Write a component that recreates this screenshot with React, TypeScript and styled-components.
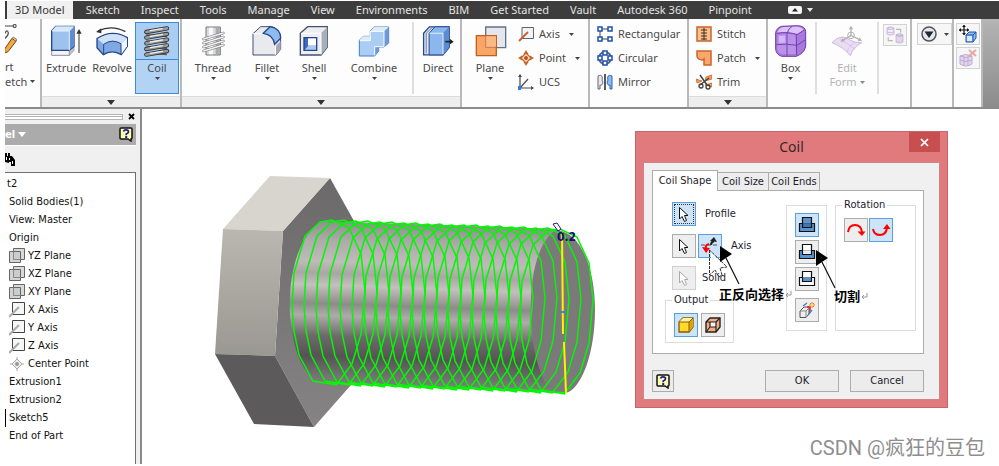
import React from "react";
import styled, { createGlobalStyle } from "styled-components";

const ui = `"Noto Sans", "Open Sans", sans-serif`;
const classic = `"DejaVu Sans Condensed", "DejaVu Sans", sans-serif`;

const Global = createGlobalStyle`
  * { box-sizing: border-box; }
  body { margin: 0; background: #fff; font-family: ${ui}; }
  button { font: inherit; color: inherit; padding: 0; margin: 0; }
  svg { display: block; flex: none; }
`;

/* ---------- frame ---------- */
const Page = styled.div`
  min-height: calc(100vh - 2px);
  padding: 1px 0 0 5px;
  display: flex;
  flex-direction: column;
`;
const TabBar = styled.nav`
  height: 18px;
  flex: none;
  display: flex;
  align-items: center;
  padding-left: 2px;
  background: #3d3d3d;
`;
const RibbonTab = styled.button<{ $active?: boolean }>`
  height: 18px;
  padding: 0 8px;
  margin-right: 5px;
  border: 0;
  white-space: nowrap;
  font-size: 11px;
  line-height: 18px;
  color: ${(p) => (p.$active ? "#333" : "#e4e4e4")};
  background: ${(p) => (p.$active ? "#f0f0f0" : "transparent")};
`;
const TabToggle = styled.button`
  margin-left: 23px;
  border: 0;
  background: none;
`;
const Ribbon = styled.div`
  height: 90px;
  flex: none;
  display: flex;
  border-bottom: 2px solid #8b8b8b;
  background: linear-gradient(#b4b4b4, #8c8c8c);
`;
const Panel = styled.section<{ $w: number }>`
  width: ${(p) => p.$w}px;
  flex: none;
  display: flex;
  flex-direction: column;
  overflow: hidden;
  border-right: 2px solid #b9b9b9;
  background: #fdfdfd;
`;
const PanelRow = styled.div<{ $pad?: string }>`
  flex: 1;
  min-height: 0;
  display: flex;
  padding: ${(p) => p.$pad || "3px 0 0"};
`;
const PanelFoot = styled.button`
  height: 11px;
  flex: none;
  display: flex;
  align-items: center;
  justify-content: center;
  border: 0;
  border-top: 1px solid #dcdcdc;
  background: #eeeeee;
`;
const BigButton = styled.button<{ $w: number; $disabled?: boolean }>`
  width: ${(p) => p.$w}px;
  height: 72px;
  flex: none;
  display: flex;
  flex-direction: column;
  align-items: center;
  padding-top: 3px;
  border: 0;
  background: none;
  font-size: 11px;
  line-height: 14px;
  color: ${(p) => (p.$disabled ? "#b4b4b4" : "#4a4a4a")};
`;
const SelectedButton = styled(BigButton)`
  border: 1px solid #3d8ad8;
  padding-top: 2px;
  background: linear-gradient(#a9cdf3 0 36px, #3d8ad8 36px 37px, #b3d3f5 37px);
`;
const BigLabel = styled.span`
  padding: 4px 0 2px;
`;
const Rule = styled.i`
  width: 2px;
  height: 72px;
  margin: 0 2px;
  background: #dedede;
`;
const SmallList = styled.div`
  display: flex;
  flex-direction: column;
`;
const SmallButton = styled.button`
  height: 24px;
  display: flex;
  align-items: center;
  gap: 5px;
  border: 0;
  background: none;
  font-size: 11px;
  line-height: 16px;
  color: #4a4a4a;
`;
const ArrowSlot = styled.span`
  padding-left: 4px;
`;
const ToolBox = styled.button<{ $w: number }>`
  width: ${(p) => p.$w}px;
  height: 22px;
  display: flex;
  align-items: center;
  justify-content: center;
  gap: 7px;
  border: 1px solid #d2d2d2;
  background: #f6f6f6;
`;
const ToolStack = styled.div`
  display: flex;
  flex-direction: column;
  gap: 2px;
`;
const CutLabel = styled.button`
  width: 36px;
  height: 72px;
  display: flex;
  flex-direction: column;
  align-items: flex-start;
  border: 0;
  background: none;
  text-align: left;
  font-size: 11px;
  line-height: 15px;
  color: #4a4a4a;
`;
const ArrowLine = styled.span`
  display: flex;
  align-items: center;
  gap: 3px;
`;
const Work = styled.div`
  flex: 1;
  min-height: 0;
  display: flex;
`;

/* ---------- browser ---------- */
const Side = styled.aside`
  width: 137px;
  flex: none;
  display: flex;
  flex-direction: column;
  padding-right: 4px;
  border-right: 2px solid #8a8a8a;
  background: #f0f0f0;
`;
const Grip = styled.div`
  height: 15px;
  display: flex;
  align-items: center;
  gap: 5px;
`;
const GripBars = styled.i`
  width: 118px;
  height: 6px;
  border: 1px solid #b4b4b4;
  border-left: 0;
  background: linear-gradient(#fff 0 1px, #b4b4b4 1px 2px, #fff 2px);
`;
const PlainButton = styled.button`
  border: 0;
  background: none;
  display: flex;
`;
const SideTitle = styled.div`
  height: 21px;
  display: flex;
  align-items: center;
  justify-content: space-between;
  padding-right: 3px;
  background: #ababab;
  color: #fff;
  font: 700 11px ${classic};
`;
const TitleMenu = styled.button`
  display: flex;
  align-items: center;
  gap: 3px;
  border: 0;
  background: none;
`;
const SideTools = styled.div`
  height: 27px;
  display: flex;
  align-items: center;
  border-top: 1px solid #fff;
`;
const Tree = styled.ul`
  flex: 1;
  margin: 0;
  padding: 2px 0 0;
  list-style: none;
  border: 1px solid #707070;
  border-width: 1px 1px 0 0;
  background: #fff;
  font: 11px/18px ${classic};
  color: #111;
`;
const TreeItem = styled.li<{ $bar?: boolean; $root?: boolean }>`
  height: 18px;
  display: flex;
  align-items: center;
  gap: 3px;
  white-space: nowrap;
  padding-left: ${(p) => (p.$root ? 1 : 3)}px;
  border-left: 1px solid ${(p) => (p.$bar ? "#000" : "transparent")};
`;

/* ---------- canvas ---------- */
const Canvas = styled.main`
  flex: 1;
  position: relative;
  overflow: hidden;
  padding: 61px 0 0 68px;
  background: #fff;
`;
const Watermark = styled.div`
  position: absolute;
  right: 14px;
  bottom: 2px;
  font: 20px/28px Roboto, "Noto Sans CJK SC", sans-serif;
  color: #8e8e8e;
`;
const Dialog = styled.section`
  position: absolute;
  left: 493px;
  top: 22px;
  width: 313px;
  padding: 0 7px 7px;
  border: 1px solid #c4676a;
  background: #e07a7d;
  font: 11px/14px ${classic};
  color: #1c1c2c;
`;
const DialogTitle = styled.header`
  height: 30px;
  display: grid;
  grid-template-columns: 1fr auto 1fr;
  align-items: start;
`;
const DialogName = styled.h2`
  grid-column: 2;
  margin: 0;
  font: 400 14px/29px ${ui};
  color: #3a2628;
`;
const CloseButton = styled.button`
  width: 31px;
  height: 20px;
  justify-self: end;
  display: flex;
  align-items: center;
  justify-content: center;
  border: 0;
  background: #c74f50;
`;
const DialogBody = styled.div`
  padding: 7px 15px 7px 8px;
  border: 1px solid #cf8587;
  background: #f0f0f0;
`;
const DialogTabs = styled.div`
  display: flex;
  align-items: flex-end;
  height: 20px;
`;
const DialogTab = styled.button<{ $active?: boolean }>`
  height: ${(p) => (p.$active ? 21 : 18)}px;
  margin-bottom: ${(p) => (p.$active ? -1 : 0)}px;
  width: ${(p) => (p.$active ? 66 : 51)}px;
  z-index: ${(p) => (p.$active ? 1 : 0)};
  white-space: nowrap;
  text-align: center;
  border: 1px solid #acacac;
  border-bottom: 0;
  border-left-width: ${(p) => (p.$active ? 1 : 0)}px;
  background: ${(p) => (p.$active ? "#fff" : "#ededed")};
`;
const TabPage = styled.div`
  display: grid;
  grid-template-columns: 121px 41px 89px;
  align-items: start;
  padding: 8px 0 10px 12px;
  border: 1px solid #acacac;
  background: #fff;
`;
const Picks = styled.div`
  display: flex;
  flex-direction: column;
  gap: 8px;
  padding-top: 3px;
`;
const PickRow = styled.div<{ $gap: number }>`
  display: flex;
  align-items: center;
  padding-left: 7px;
  gap: ${(p) => p.$gap}px;
`;
const PickButtons = styled.div`
  display: flex;
  gap: 2px;
`;
const IconButton = styled.button<{ $on?: boolean; $dim?: boolean }>`
  width: 24px;
  height: 24px;
  display: flex;
  align-items: center;
  justify-content: center;
  border: 1px solid ${(p) => (p.$on ? "#5aa0e0" : p.$dim ? "#d0d0d0" : "#acacac")};
  background: ${(p) => (p.$on ? "#cde4f8" : "#eeeeee")};
`;
const FocusedButton = styled(IconButton)`
  outline: 1px dotted #333;
  outline-offset: -3px;
`;
const Group = styled.fieldset`
  min-width: 0;
  margin: 0;
  padding: 7px 8px 5px;
  border: 1px solid #dcdcdc;
`;
const OutputGroup = styled(Group)`
  width: 69px;
  margin-top: -4px;
`;
const RotationGroup = styled(Group)`
  width: 81px;
  height: 132px;
  margin-left: 8px;
`;
const Legend = styled.legend`
  height: 12px;
  margin-left: -2px;
  padding: 0 2px;
  line-height: 12px;
`;
const GroupRow = styled.div<{ $gap: number }>`
  display: flex;
  gap: ${(p) => p.$gap}px;
`;
const Operations = styled.div`
  height: 126px;
  margin-top: 6px;
  padding: 7px 8px;
  border: 1px solid #dcdcdc;
  display: flex;
  flex-direction: column;
  gap: 3px;
`;
const Spaced = styled.div`
  margin-top: 4px;
`;
const DialogFoot = styled.footer`
  display: flex;
  align-items: center;
  gap: 11px;
  margin-top: 16px;
`;
const FootButton = styled.button<{ $w: number }>`
  width: ${(p) => p.$w}px;
  height: 22px;
  display: flex;
  align-items: center;
  justify-content: center;
  border: 1px solid #acacac;
  background: #ececec;
`;
const Spacer = styled.span`
  flex: 1;
`;
const Notes = styled.div`
  position: absolute;
  left: 66px;
  top: 110px;
  pointer-events: none;
`;
const Note = styled.span<{ $x: number; $y: number }>`
  position: absolute;
  left: ${(p) => p.$x}px;
  top: ${(p) => p.$y}px;
  display: flex;
  align-items: center;
  white-space: nowrap;
  font: 700 13px/18px "Noto Sans CJK SC", sans-serif;
  color: #000;
`;

/* ---------- icons ---------- */
type Art = { box: string; w?: number; h?: number; children: React.ReactNode };
const Svg = ({ box, w = 32, h = 32, children }: Art) => (
  <svg viewBox={box} width={w} height={h} aria-hidden="true">
    {children}
  </svg>
);
const Down = ({ w = 5, c = "#444" }: { w?: number; c?: string }) => (
  <Svg box="0 0 10 6" w={w} h={Math.round(w * 0.6)}>
    <path d="M0 0H10L5 6Z" fill={c} />
  </Svg>
);
const line = "#26468c";
const Extrude = () => (
  <Svg box="150 74 96 96">
    <path d="M155 150L167 137H222L208 150V165H155Z" fill="#f4f4f6" stroke="#8790a5" strokeWidth="3" />
    <path d="M208 165L222 151V137L208 150Z" fill="#bfc4d0" stroke="#8790a5" strokeWidth="2" />
    <path d="M155 92L167 78H222V138L208 150H155Z" fill="#9dc2ee" stroke={line} strokeWidth="4" />
    <path d="M155 92L167 78H222L208 92Z" fill="#d4e7fb" />
    <path d="M208 92L222 78V138L208 150Z" fill="#5e8cd2" />
    <path d="M157 92H208V150M208 92L221 79" fill="none" stroke="#e7f2ff" strokeWidth="3" />
    <path d="M237 158V95" stroke="#333" strokeWidth="3" />
    <path d="M229 100L237 86L245 100Z" fill="#333" />
  </Svg>
);
const Revolve = () => (
  <Svg box="286 74 96 96">
    <path d="M292 92Q334 72 374 94" fill="none" stroke="#333" strokeWidth="4" />
    <path d="M286 95L302 84V99Z" fill="#333" />
    <path d="M289 115Q334 85 380 112V138L362 163Q334 146 308 163L289 142Z" fill="#7fa9e2" stroke={line} strokeWidth="4" />
    <path d="M291 116Q334 88 378 113L361 130Q334 112 309 132Z" fill="#cfe2f8" />
    <path d="M361 130L379 113V138L362 162Z" fill="#eef5ff" />
    <path d="M309 132V161M361 130V161M309 132Q334 114 361 130" fill="none" stroke={line} strokeWidth="3" />
  </Svg>
);
const Coil = () => (
  <Svg box="426 76 96 96">
    {[0, 1, 2, 3].map((i) => (
      <path key={i} d={`M442 ${106 + i * 18}L504 ${110 + i * 18}`} stroke="#5a5a5a" strokeWidth="5" />
    ))}
    {[0, 1, 2, 3, 4].map((i) => (
      <g key={i} transform={`translate(0 ${i * 17})`} strokeLinecap="round">
        <path d="M442 97L504 86" stroke="#333" strokeWidth="13" />
        <path d="M442 97L504 86" stroke="#9a9a9a" strokeWidth="8" />
        <path d="M454 93L490 87" stroke="#eeeeee" strokeWidth="4" />
      </g>
    ))}
  </Svg>
);
const Thread = () => (
  <Svg box="594 74 96 96">
    <path d="M621 80H664V164H621Z" fill="#d9dadd" stroke="#777" strokeWidth="3" />
    <path d="M630 82H642V162H630Z" fill="#f8f8f8" />
    <path d="M650 82H662V162H650Z" fill="#aaabb0" />
    {[0, 1, 2, 3].map((i) => (
      <path key={i} d={`M614 ${116 + i * 12}L673 ${98 + i * 12}`} stroke="#777" strokeWidth="8" strokeLinecap="round" />
    ))}
    {[0, 1, 2, 3].map((i) => (
      <path key={i} d={`M614 ${116 + i * 12}L673 ${98 + i * 12}`} stroke="#f4f4f4" strokeWidth="4" strokeLinecap="round" />
    ))}
  </Svg>
);
const Fillet = () => (
  <Svg box="35 74 96 96">
    <path d="M41 100L64 79H99Q124 88 124 122V147L110 164H41Z" fill="#e9eaee" stroke="#44506c" strokeWidth="3" />
    <path d="M41 100H72Q108 104 108 138V164" fill="none" stroke="#fff" strokeWidth="3" />
    <path d="M110 136L124 122V147L110 164Z" fill="#a6aab6" />
    <path d="M72 99L92 79Q124 84 124 114L106 132Q102 103 72 99Z" fill="#8fbcf0" stroke={line} strokeWidth="4" />
  </Svg>
);
const Shell = () => (
  <Svg box="178 74 96 96">
    <path d="M185 99L207 79H266V140L247 164H185Z" fill="#eceef2" stroke="#44506c" strokeWidth="4" />
    <path d="M247 99L266 80V140L247 164Z" fill="#a9aebb" />
    <path d="M187 99H247V162" fill="none" stroke="#fff" strokeWidth="3" />
    <path d="M196 112H234V150H196Z" fill="#3f6bbd" stroke={line} strokeWidth="4" />
    <path d="M208 114H232V136H208Z" fill="#fff" />
    <path d="M198 148L209 137H232V148Z" fill="#a8cbf3" />
  </Svg>
);
const Combine = () => (
  <Svg box="354 74 96 96">
    <path d="M358 120L370 108H391V92L402 80H446V128L432 140H416V152L404 167H358Z" fill="#a9cdf3" stroke="#4e78c2" strokeWidth="3" />
    <path d="M432 94L446 80V128L432 140ZM404 140H416V152L404 167Z" fill="#6c99d8" />
    <path d="M358 120L370 108H391V120ZM391 93L402 80H446L432 93Z" fill="#dbebfc" />
    <path d="M391 93H432V139H404V165M391 93V121H360" fill="none" stroke="#fff" strokeWidth="3" />
  </Svg>
);
const Direct = () => (
  <Svg box="550 74 99 96">
    <path d="M555 98L573 78H634V142L615 165H555Z" fill="#dfe8f4" stroke={line} strokeWidth="4" />
    <path d="M572 98L590 78H634V142L615 165H572Z" fill="#8cb7ee" stroke={line} strokeWidth="3" />
    <path d="M615 98L634 78V142L615 165Z" fill="#5d8bd0" />
    <path d="M563 160V98L582 80" fill="none" stroke={line} strokeWidth="2" />
    <path d="M574 98H615V162" fill="none" stroke="#e6f1ff" strokeWidth="3" />
    <path d="M622 124H640" stroke="#222" strokeWidth="5" />
    <path d="M636 115L648 124L636 133Z" fill="#222" />
  </Svg>
);
const Plane = () => (
  <Svg box="-21 74 99 96" w={33}>
    <path d="M14 80H74V142H14Z" fill="#e3e6ec" stroke="#667085" strokeWidth="4" />
    <path d="M-14 106H46V166H-14Z" fill="#f9a566" stroke="#c25f1d" strokeWidth="4" />
    <path d="M14 108V141H45" fill="none" stroke="#a86a43" strokeWidth="2" />
    <path d="M16 108H45V139H16Z" fill="#fbb985" />
  </Svg>
);
const Axis = () => (
  <Svg box="0 0 16 16" w={16} h={16}>
    <path d="M4 1.500H15.500V12.500H4Z" fill="#f2f3f6" stroke="#5b6475" />
    <path d="M1 15L10 6" stroke="#c8622a" strokeWidth="2" />
  </Svg>
);
const Point = () => (
  <Svg box="0 0 16 16" w={16} h={16}>
    <path d="M8 0L10.500 4H5.500ZM8 16L10.500 12H5.500ZM0 8L4 5.500V10.500ZM16 8L12 5.500V10.500Z" fill="#cc6a2b" />
    <path d="M8 3L13 8L8 13L3 8Z" fill="#fce0cb" stroke="#c8622a" strokeWidth="1.300" />
    <circle cx="8" cy="8" r="2" fill="#b8521c" />
  </Svg>
);
const Ucs = () => (
  <Svg box="0 0 16 16" w={16} h={16}>
    <path d="M2 1V14H15M2 14L10 5" fill="none" stroke="#4a4a4a" strokeWidth="1.200" />
    <path d="M0 3L2 0L4 3ZM13 12L16 14L13 16Z" fill="#4a4a4a" />
    <path d="M0 12H3V16H0Z" fill="#2e7de0" />
  </Svg>
);
const Squares = ({ at, children }: { at: number[][]; children: React.ReactNode }) => (
  <Svg box="0 0 16 16" w={16} h={16}>
    {children}
    {at.map(([x, y]) => (
      <path key={`${x}-${y}`} d={`M${x} ${y}h4v4h-4Z`} fill="#fff" stroke="#1d4fae" strokeWidth="1.500" />
    ))}
  </Svg>
);
const Rect = () => (
  <Squares at={[[1, 1], [11, 1], [1, 11], [11, 11]]}>
    <path d="M13 3H3V13H13" fill="none" stroke="#444" />
  </Squares>
);
const Circ = () => (
  <Squares at={[[6, 1], [1, 6], [11, 6], [6, 11]]}>
    <circle cx="8" cy="8" r="6" fill="none" stroke="#55688f" strokeWidth="2" />
  </Squares>
);
const Mirror = () => (
  <Svg box="0 0 16 16" w={16} h={16}>
    <path d="M1 2C5 0 6 3 5 6C7 9 5 12 3 11V15H1Z" fill="#e6e8ec" stroke="#667" />
    <path d="M8 0V16" stroke="#222" strokeWidth="1.500" />
    <path d="M15 2C11 0 10 3 11 6C9 9 11 12 13 11V15H15Z" fill="#8cbcf2" stroke="#2864b8" />
  </Svg>
);
const Stitch = () => (
  <Svg box="0 0 16 16" w={16} h={16}>
    <path d="M1 1H15V15H1Z" fill="#fbc092" stroke="#c9662a" strokeWidth="1.500" />
    <path d="M8 2V14M5 4H11M5 7H11M5 10H11M5 13H11" stroke="#4a2a14" />
  </Svg>
);
const Patch = () => (
  <Svg box="0 0 16 16" w={16} h={16}>
    <path d="M1 1H15V15H8V9Q6 11 3 9Q1 8 1 6Z" fill="#fba76c" stroke="#c9662a" strokeWidth="1.500" />
  </Svg>
);
const Trim = () => (
  <Svg box="0 0 16 16" w={16} h={16}>
    <path d="M10 3L16 1V5L9 7ZM9 11L16 9V13ZM0 5L6 7L1 9Z" fill="#f39a5c" stroke="#c9662a" strokeWidth="0.800" />
    <path d="M4 1L11 11M13 4L4 11" stroke="#444" strokeWidth="1.500" />
    <circle cx="12" cy="13" r="2" fill="none" stroke="#444" strokeWidth="1.300" />
    <circle cx="5" cy="12" r="2" fill="none" stroke="#444" strokeWidth="1.300" />
  </Svg>
);
const BoxIcon = () => (
  <Svg box="132 73 96 96">
    <path d="M134 96Q136 82 152 77L200 75Q222 76 224 92V136Q222 152 206 162L196 167H152Q136 162 134 146Z" fill="#a878dc" stroke="#6c3ba4" strokeWidth="3" />
    <path d="M138 96Q146 80 158 79L200 78Q214 80 218 88L200 100Q168 92 138 96Z" fill="#dcc2f6" />
    <path d="M140 102Q168 98 194 102V160H152Q140 156 139 146Z" fill="#bb92ea" />
    <path d="M168 98V166M136 132Q168 128 198 134L222 118M196 102L197 164M168 98Q172 84 184 76M137 98Q172 92 198 102L220 88" fill="none" stroke="#7443ac" strokeWidth="3" />
    <path d="M144 106H162V126H144Z" fill="#d5b7f5" />
  </Svg>
);
const EditForm = () => (
  <Svg box="304 73 96 96">
    <path d="M307 126Q330 102 350 112Q376 128 396 126Q370 140 362 165Q340 138 307 126Z" fill="#e9dcf3" stroke="#cfb9e2" strokeWidth="3" />
    <path d="M330 116Q350 126 378 146M352 156Q358 128 384 124" fill="none" stroke="#cfb9e2" strokeWidth="2" />
    <path d="M364 104V80M364 104L338 120M364 104L392 118" stroke="#b4b4b4" strokeWidth="4" />
    <path d="M357 86L364 75L371 86ZM333 124L338 112L346 122ZM397 122L384 121L390 110Z" fill="#b4b4b4" />
    <circle cx="364" cy="104" r="10" fill="none" stroke="#b4b4b4" strokeWidth="3" />
  </Svg>
);
const Convert = () => (
  <Svg box="0 0 16 16" w={18} h={18}>
    <path d="M1 2Q4 0 7 2V7Q4 9 1 7ZM1 2Q4 4 7 2M1 5Q4 7 7 5" fill="#f4ecf9" stroke="#cdb9dd" />
    <path d="M9 8Q12 6 15 8V14Q12 16 9 14Z" fill="#e2d3ef" stroke="#cdb9dd" />
    <path d="M9 8Q12 10 15 8M9 3H13V6M2 10V13H6" fill="none" stroke="#b8b8b8" />
  </Svg>
);
const Dropper = () => (
  <Svg box="0 0 16 16" w={16} h={16}>
    <circle cx="8" cy="8" r="7" fill="#e4e7ec" stroke="#555" strokeWidth="1.500" />
    <path d="M3.500 5.500H12.500L8 12Z" fill="#1e2836" />
  </Svg>
);
const MoveBody = () => (
  <Svg box="0 0 18 18" w={18} h={18}>
    <path d="M5 0V10M0 5H10" stroke="#111" strokeWidth="1.200" />
    <path d="M3 2L5 0L7 2ZM3 8L5 10L7 8ZM2 3L0 5L2 7ZM8 3L10 5L8 7Z" fill="#111" />
    <path d="M7 10L10 7H17V13L14 17H7Z" fill="#8fbbee" stroke="#1d55ac" />
    <path d="M7 10H14V17M14 10L17 7" fill="none" stroke="#1d55ac" />
    <path d="M8 11H13V16H8Z" fill="#dcebfb" />
  </Svg>
);
const DeleteBody = () => (
  <Svg box="0 0 18 18" w={18} h={18}>
    <path d="M1 7Q6 4 13 7V15Q7 19 1 15Z" fill="#e2d6ec" stroke="#bfa9d0" />
    <path d="M1 7Q7 10 13 7M1 11Q7 14 13 11M5 8V16M9 8V16" fill="none" stroke="#bfa9d0" />
    <path d="M10 1L17 7M17 1L10 7" stroke="#e3a9a6" strokeWidth="2" />
  </Svg>
);
const HelpIcon = () => (
  <svg viewBox="0 0 14 15" width="14" height="15" role="img" aria-label="Help">
    <path d="M1 2Q1 1 2 1H12Q13 1 13 2V11Q13 12 12 12V14L9 12H2Q1 12 1 11Z" fill="#ffffb0" stroke="#111" strokeWidth="1.500" />
    <path d="M4.500 4.500Q5 2.800 7 2.800Q9.500 2.800 9.500 4.700Q9.500 6 7.200 7V8.200" fill="none" stroke="#1b1b9c" strokeWidth="1.700" />
    <path d="M6.200 9H8.200V11H6.200Z" fill="#1b1b9c" />
  </svg>
);
const Binoculars = () => (
  <Svg box="0 0 10 13" w={10} h={13}>
    <path d="M0 0H2V3H3V0H5V3H7L10 7V13H6V9H4V10L0 9Z" fill="#000" />
    <path d="M1 4H2V7H1ZM4 5H5V7H4ZM7 8H8V11H7Z" fill="#fff" />
  </Svg>
);
const TreePlane = () => (
  <Svg box="0 0 16 16" w={16} h={16}>
    <path d="M4.500 0.500H15.500V11.500H4.500Z" fill="#d9d9d9" stroke="#666" />
    <path d="M0.500 3.500H11.500V14.500H0.500Z" fill="#c8c8c8" fillOpacity="0.8" stroke="#666" />
    <path d="M4.500 3.500V11.500H11.500" fill="none" stroke="#888" />
  </Svg>
);
const TreeAxis = () => (
  <Svg box="0 0 16 16" w={16} h={16}>
    <path d="M3.500 0.500H15.500V12.500H3.500Z" fill="#f6f6f6" stroke="#444" />
    <path d="M0 15L10 5" stroke="#aaa" strokeWidth="2" />
  </Svg>
);
const TreePoint = () => (
  <Svg box="0 0 16 16" w={16} h={16}>
    <path d="M8 1V15M1 8H15" stroke="#aaa" />
    <path d="M8 3L13 8L8 13L3 8Z" fill="#eee" stroke="#aaa" />
    <circle cx="8" cy="8" r="2" fill="#999" />
  </Svg>
);
const Pick = ({ c = "#111" }: { c?: string }) => (
  <Svg box="0 0 12 17" w={12} h={17}>
    <path d="M1.500 1.500V13L4 10.500L6.500 15.500L8.500 14.500L6.500 9.500H10Z" fill="#fff" stroke={c} />
  </Svg>
);
const FlipAxis = () => (
  <Svg box="0 0 20 20" w={20} h={20}>
    <path d="M1 9H19" stroke="#456" strokeDasharray="4 2" />
    <path d="M11 9Q11 6 14 5" fill="none" stroke="#222" strokeWidth="2" />
    <path d="M10 5L14 1L17 6Z" fill="#222" />
    <path d="M9 8Q5 9 6 12" fill="none" stroke="red" strokeWidth="2" />
    <path d="M2 11L10 12L6 17Z" fill="red" />
  </Svg>
);
const Op = ({ top, base, mid }: { top: string; base: string; mid: string }) => (
  <Svg box="0 0 18 18" w={18} h={18}>
    <path d="M1.500 7.500H16.500V15.500H1.500Z" fill={base} stroke="#111" strokeWidth="1.200" />
    <path d="M5 1.500H13V7.500H5Z" fill={top} />
    <path d="M5 7.500H13V11.500H5Z" fill={mid} />
    <path d="M4.500 1.500H13.500V11.500H4.500Z" fill="none" stroke="#111" strokeWidth="1.200" />
  </Svg>
);
const NewSolid = () => (
  <Svg box="0 0 18 18" w={18} h={18}>
    <path d="M2 10L6 6H11V13L8 16.500H2Z" fill="#eee" stroke="#555" />
    <path d="M2 10H8V16M8 10L11 7" fill="none" stroke="#888" />
    <path d="M9 6H12V12" fill="none" stroke="#e02020" strokeWidth="1.500" />
    <path d="M5 5L9 2M10 14L14 9" stroke="#3b7fd0" strokeWidth="1.300" />
    <path d="M14 1V7M11 4H17M12 2L16 6M16 2L12 6" stroke="#ef7d14" />
    <circle cx="14" cy="4" r="1" fill="#fff3a0" />
  </Svg>
);
const SolidOut = () => (
  <Svg box="0 0 16 16" w={16} h={16}>
    <path d="M1 5L5 1H15V10L11 15H1Z" fill="#ffd92e" stroke="#8a5a00" strokeWidth="1.300" />
    <path d="M11 5L15 1V10L11 15Z" fill="#e0a400" />
    <path d="M1 5L5 1H15L11 5Z" fill="#fff3a8" />
    <path d="M1 5H11V15M11 5L15 1" fill="none" stroke="#8a5a00" />
  </Svg>
);
const SurfaceOut = () => (
  <Svg box="0 0 16 16" w={16} h={16}>
    <path d="M1 5L5 1H15V10L11 15H1Z" fill="#f5ad80" stroke="#222" strokeWidth="1.400" />
    <path d="M5 5H11V10H5Z" fill="#f4f4f4" />
    <path d="M1 5H11V15M11 5L15 1M5 5V10H11M5 10L1 15" fill="none" stroke="#222" strokeWidth="1.200" />
  </Svg>
);
const Clockwise = () => (
  <Svg box="0 0 20 20" w={20} h={20}>
    <path d="M2 12Q3 5 9 5Q15 5 16 12" fill="none" stroke="red" strokeWidth="2" />
    <path d="M11.500 11.500H19.500L16 16Z" fill="red" />
  </Svg>
);
const Counter = () => (
  <Svg box="0 0 20 20" w={20} h={20}>
    <path d="M2 9Q3 15 9 15Q15 15 16 8" fill="none" stroke="red" strokeWidth="2" />
    <path d="M12 9H19.500L16 4Z" fill="red" />
  </Svg>
);

/* ---------- bolt ---------- */
const TURNS = 20;
const PITCH = 12;
const arcs = [
  [337, 385], [313, 381], [299, 355], [294, 331], [292, 306], [294, 273], [305, 236], [320, 222],
  [332, 220], [349, 228], [361, 254], [365, 291], [361, 334], [352, 364], [337, 384], [325, 383],
];
const turn = (i: number) =>
  arcs.map(([x, y]) => `${x + i * PITCH},${y + Math.round(i * 0.45)}`).join(" ");

const Bolt = () => (
  <svg viewBox="210 170 390 262" width="390" height="262" role="img" aria-label="Bolt with coil preview">
    <defs>
      <linearGradient id="shaft" gradientUnits="userSpaceOnUse" x1="430" y1="221" x2="424" y2="390">
        <stop offset="0" stopColor="#8b8989" />
        <stop offset="0.140" stopColor="#aeabab" />
        <stop offset="0.260" stopColor="#bfbbb9" />
        <stop offset="0.330" stopColor="#a9a6a5" />
        <stop offset="0.400" stopColor="#c4c0bd" />
        <stop offset="0.510" stopColor="#8e8b8b" />
        <stop offset="0.580" stopColor="#aeabaa" />
        <stop offset="0.700" stopColor="#6d6a6a" />
        <stop offset="0.820" stopColor="#555353" />
        <stop offset="1" stopColor="#858383" />
      </linearGradient>
      <linearGradient id="side" x1="0" y1="0" x2="0" y2="1">
        <stop offset="0" stopColor="#bab7b1" />
        <stop offset="1" stopColor="#9a9892" />
      </linearGradient>
      <linearGradient id="face" x1="0" y1="0" x2="0" y2="1">
        <stop offset="0" stopColor="#6b6969" />
        <stop offset="1" stopColor="#858383" />
      </linearGradient>
    </defs>
    <path d="M330 178L354 221L372 300L351 385L314 427L275 356L283 231Z" fill="url(#face)" />
    <path d="M270 176L330 178L283 231L223 229Z" fill="#d8d5ce" />
    <path d="M223 229L283 231L275 356L215 354Z" fill="url(#side)" />
    <path d="M215 354L275 356L314 427L254 424Z" fill="#5c5a5a" />
    <path d="M322 221L560 229L566 393L316 382C280 355 280 245 322 221Z" fill="url(#shaft)" />
    <path d="M556 230C582 232 595 270 595 310C595 350 583 388 566 393L545 383C533 357 530 330 531 300C532 268 540 240 556 230Z" fill="#7b7979" />
    <g fill="none" stroke="#00f800" strokeWidth="1.500">
      {Array.from({ length: TURNS }, (_, i) => (
        <polyline key={i} points={turn(i)} />
      ))}
    </g>
    <path d="M562 232L563 334M564 342L566 393" stroke="#fff000" strokeWidth="2" />
    <path d="M561 311H565V313H561Z" fill="#2a86e0" />
    <path d="M553 224L557 223L561 229L558 231Z" fill="#fff" stroke="#1d1d8c" />
    <text x="557" y="241" fontFamily="DejaVu Sans Condensed, DejaVu Sans, sans-serif" fontSize="12" fontWeight="700" fill="#10106e">0.2</text>
  </svg>
);

const tabs = ["3D Model", "Sketch", "Inspect", "Tools", "Manage", "View", "Environments", "BIM", "Get Started", "Vault", "Autodesk 360", "Pinpoint"];
const tree: [string, React.ReactNode?][] = [
  ["t2"], ["Solid Bodies(1)"], ["View: Master"], ["Origin"],
  ["YZ Plane", <TreePlane />], ["XZ Plane", <TreePlane />], ["XY Plane", <TreePlane />],
  ["X Axis", <TreeAxis />], ["Y Axis", <TreeAxis />], ["Z Axis", <TreeAxis />],
  ["Center Point", <TreePoint />],
  ["Extrusion1"], ["Extrusion2"], ["Sketch5"], ["End of Part"],
];

const Big = ({ w, icon, text, arrow }: { w: number; icon: React.ReactNode; text: string; arrow?: boolean }) => (
  <BigButton $w={w}>
    {icon}
    <BigLabel>{text}</BigLabel>
    {arrow && <Down />}
  </BigButton>
);
const Small = ({ icon, text, arrow }: { icon: React.ReactNode; text: string; arrow?: boolean }) => (
  <SmallButton>
    {icon}
    {text}
    {arrow && <ArrowSlot><Down /></ArrowSlot>}
  </SmallButton>
);
const Foot = ({ name }: { name: string }) => (
  <PanelFoot aria-label={name}><Down w={8} c="#333" /></PanelFoot>
);
const Return = () => (
  <Svg box="0 0 8 8" w={8} h={8}>
    <path d="M7 1V5H2M4 3L2 5L4 7" fill="none" stroke="#999" />
  </Svg>
);

const blue = "#5b93cf";

export default function App() {
  return (
    <>
      <Global />
      <Page>
        <TabBar>
          {tabs.map((t, i) => (
            <RibbonTab key={t} $active={i === 0}>{t}</RibbonTab>
          ))}
          <TabToggle aria-label="Minimize ribbon">
            <Svg box="0 0 26 8" w={26} h={8}>
              <rect x="0" y="0" width="14" height="8" rx="2" fill="#f4f4f4" />
              <path d="M4 5.500L7 2L10 5.500Z" fill="#222" />
              <path d="M19 2H25L22 6Z" fill="#e8e8e8" />
            </Svg>
          </TabToggle>
        </TabBar>

        <Ribbon>
          <Panel $w={37}>
            <PanelRow>
              <CutLabel>
                <Svg box="15 71 36 111" w={12} h={37}>
                  <path d="M12 83H42" stroke="#444" strokeWidth="3" />
                  <path d="M40 79H48V87H40Z" fill="#fff" stroke="#444" strokeWidth="3" />
                  <path d="M14 106Q22 90 25 104Q24 114 14 120" fill="none" stroke="#555" strokeWidth="4" />
                  <path d="M14 152L36 120L48 129L24 160L14 164Z" fill="#f5a93a" stroke="#6a4520" strokeWidth="3" />
                  <path d="M36 120L40 116L51 124L48 129Z" fill="#e8c8a0" stroke="#6a4520" strokeWidth="2" />
                </Svg>
                <span>rt</span>
                <ArrowLine>etch <Down /></ArrowLine>
              </CutLabel>
            </PanelRow>
          </Panel>
          <Panel $w={140}>
            <PanelRow $pad="3px 0 0 1px">
              <Big w={46} icon={<Extrude />} text="Extrude" />
              <Big w={46} icon={<Revolve />} text="Revolve" />
              <SelectedButton $w={44}>
                <Coil />
                <BigLabel>Coil</BigLabel>
                <Down />
              </SelectedButton>
            </PanelRow>
            <Foot name="Create" />
          </Panel>
          <Panel $w={280}>
            <PanelRow>
              <Big w={62} icon={<Thread />} text="Thread" arrow />
              <Big w={46} icon={<Fillet />} text="Fillet" arrow />
              <Big w={48} icon={<Shell />} text="Shell" arrow />
              <Big w={72} icon={<Combine />} text="Combine" arrow />
              <Rule />
              <Big w={44} icon={<Direct />} text="Direct" />
            </PanelRow>
            <Foot name="Modify" />
          </Panel>
          <Panel $w={128}>
            <PanelRow>
              <Big w={56} icon={<Plane />} text="Plane" arrow />
              <SmallList>
                <Small icon={<Axis />} text="Axis" arrow />
                <Small icon={<Point />} text="Point" arrow />
                <Small icon={<Ucs />} text="UCS" />
              </SmallList>
            </PanelRow>
          </Panel>
          <Panel $w={99}>
            <PanelRow $pad="3px 0 0 7px">
              <SmallList>
                <Small icon={<Rect />} text="Rectangular" />
                <Small icon={<Circ />} text="Circular" />
                <Small icon={<Mirror />} text="Mirror" />
              </SmallList>
            </PanelRow>
          </Panel>
          <Panel $w={79}>
            <PanelRow $pad="3px 0 0 7px">
              <SmallList>
                <Small icon={<Stitch />} text="Stitch" />
                <Small icon={<Patch />} text="Patch" arrow />
                <Small icon={<Trim />} text="Trim" />
              </SmallList>
            </PanelRow>
            <Foot name="Surface" />
          </Panel>
          <Panel $w={144}>
            <PanelRow>
              <Big w={45} icon={<BoxIcon />} text="Box" arrow />
              <Rule />
              <BigButton $w={56} $disabled disabled>
                <EditForm />
                <BigLabel>Edit<br /><ArrowLine>Form <Down c="#888" /></ArrowLine></BigLabel>
              </BigButton>
              <Rule />
              <PanelRow $pad="2px 0 0 2px">
                <ToolBox $w={24} aria-label="Convert"><Convert /></ToolBox>
              </PanelRow>
            </PanelRow>
          </Panel>
          <Panel $w={42}>
            <PanelRow $pad="4px 0 0 5px">
              <ToolBox $w={35} aria-label="Filter"><Dropper /><Down /></ToolBox>
            </PanelRow>
          </Panel>
          <Panel $w={29}>
            <PanelRow $pad="4px 0 0 2px">
              <ToolStack>
                <ToolBox $w={24} aria-label="Move bodies"><MoveBody /></ToolBox>
                <ToolBox $w={24} aria-label="Delete face"><DeleteBody /></ToolBox>
              </ToolStack>
            </PanelRow>
          </Panel>
        </Ribbon>

        <Work>
          <Side>
            <Grip>
              <GripBars />
              <PlainButton aria-label="Close browser">
                <Svg box="0 0 7 7" w={7} h={7}>
                  <path d="M1 1L6 6M6 1L1 6" stroke="#000" strokeWidth="1.800" />
                </Svg>
              </PlainButton>
            </Grip>
            <SideTitle>
              <TitleMenu>el <Down w={8} c="#fff" /></TitleMenu>
              <PlainButton><HelpIcon /></PlainButton>
            </SideTitle>
            <SideTools>
              <PlainButton aria-label="Find"><Binoculars /></PlainButton>
            </SideTools>
            <Tree>
              {tree.map(([name, icon], i) => (
                <TreeItem key={name} $root={i === 0} $bar={name === "Sketch5"}>
                  {icon}
                  {name}
                </TreeItem>
              ))}
            </Tree>
          </Side>

          <Canvas>
            <Bolt />
            <Dialog role="dialog" aria-label="Coil">
              <DialogTitle>
                <DialogName>Coil</DialogName>
                <CloseButton aria-label="Close">
                  <Svg box="0 0 9 9" w={9} h={9}>
                    <path d="M1 1L8 8M8 1L1 8" stroke="#fff" strokeWidth="1.700" />
                  </Svg>
                </CloseButton>
              </DialogTitle>
              <DialogBody>
                <DialogTabs role="tablist">
                  <DialogTab role="tab" aria-selected $active>Coil Shape</DialogTab>
                  <DialogTab role="tab">Coil Size</DialogTab>
                  <DialogTab role="tab">Coil Ends</DialogTab>
                </DialogTabs>
                <TabPage role="tabpanel">
                  <Picks>
                    <PickRow $gap={9}>
                      <FocusedButton $on aria-label="Profile"><Pick /></FocusedButton>
                      Profile
                    </PickRow>
                    <PickRow $gap={9}>
                      <PickButtons>
                        <IconButton aria-label="Axis"><Pick /></IconButton>
                        <IconButton $on aria-label="Reverse axis"><FlipAxis /></IconButton>
                      </PickButtons>
                      Axis
                    </PickRow>
                    <PickRow $gap={6}>
                      <IconButton $dim disabled aria-label="Solid"><Pick c="#aaa" /></IconButton>
                      Solid
                    </PickRow>
                    <OutputGroup>
                      <Legend>Output</Legend>
                      <GroupRow $gap={3}>
                        <IconButton $on aria-label="Solid output"><SolidOut /></IconButton>
                        <IconButton aria-label="Surface output"><SurfaceOut /></IconButton>
                      </GroupRow>
                    </OutputGroup>
                  </Picks>
                  <Operations>
                    <IconButton $on aria-label="Join"><Op top={blue} base={blue} mid="#3f75b5" /></IconButton>
                    <IconButton aria-label="Cut"><Op top="#fff" base={blue} mid="#e8f1fa" /></IconButton>
                    <IconButton aria-label="Intersect"><Op top="#fff" base="#fff" mid={blue} /></IconButton>
                    <Spaced>
                      <IconButton aria-label="New solid"><NewSolid /></IconButton>
                    </Spaced>
                  </Operations>
                  <RotationGroup>
                    <Legend>Rotation</Legend>
                    <GroupRow $gap={1}>
                      <IconButton aria-label="Clockwise"><Clockwise /></IconButton>
                      <IconButton $on aria-label="Counterclockwise"><Counter /></IconButton>
                    </GroupRow>
                  </RotationGroup>
                </TabPage>
                <DialogFoot>
                  <FootButton $w={22}><HelpIcon /></FootButton>
                  <Spacer />
                  <FootButton $w={74}>OK</FootButton>
                  <FootButton $w={74}>Cancel</FootButton>
                </DialogFoot>
              </DialogBody>
              <Notes>
                <svg viewBox="702 242 160 60" width="160" height="60" aria-hidden="true">
                  <path d="M711 252V272L715 268L718 270V266H724Z" fill="#fff" />
                  <path d="M709.500 250V275L715 270L719 277L722 275L720 268L727 267Z" fill="none" stroke="#333" strokeDasharray="3 1" />
                  <path d="M720 246V262L732 254ZM816 250V266L828 258Z" fill="#000" />
                  <path d="M726 258L739 284M822 262L835 288" stroke="#111" strokeWidth="1.200" />
                </svg>
                <Note $x={17} $y={43}>正反向选择<Return /></Note>
                <Note $x={132} $y={45}>切割<Return /></Note>
              </Notes>
            </Dialog>
            <Watermark>CSDN @疯狂的豆包</Watermark>
          </Canvas>
        </Work>
      </Page>
    </>
  );
}
